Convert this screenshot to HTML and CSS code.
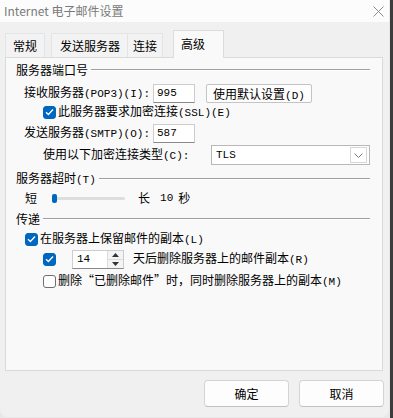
FILE: index.html
```html
<!DOCTYPE html>
<html lang="zh-CN">
<head>
    <meta charset="UTF-8">
    <meta name="viewport" content="width=device-width, initial-scale=1.0">
    <title>Internet 电子邮件设置</title>
    <link rel="stylesheet" href="styles.css">
</head>
<body>
    <div class="window">
        <div class="titlebar">
            <span class="title">Internet 电子邮件设置</span>
            <svg class="close" width="11" height="11" viewBox="0 0 11 11"><path d="M0.5 0.5L10.5 10.5M10.5 0.5L0.5 10.5" stroke="#8c8c8c" stroke-width="1"/></svg>
        </div>

        <div class="tabs">
            <div class="tab tab-1">常规</div>
            <div class="tab tab-2">发送服务器</div>
            <div class="tab tab-3">连接</div>
            <div class="tab tab-4 active">高级</div>
        </div>

        <div class="panel">
            <div class="group-title first"><span>服务器端口号</span><span class="rule"></span></div>

            <div class="row pop3">
                <span class="label-wide">接收服务器<span class="m">(POP3)(I):</span></span>
                <div class="textbox m">995</div>
                <div class="btn-small">使用默认设置<span class="m">(D)</span></div>
            </div>

            <div class="row check-row ssl">
                <span class="check on"><svg width="9" height="8" viewBox="0 0 9 8"><path d="M1 4.2L3.4 6.5L8 1.5" fill="none" stroke="#fff" stroke-width="1.3"/></svg></span>
                <span class="check-text">此服务器要求加密连接<span class="m">(SSL)(E)</span></span>
            </div>

            <div class="row smtp">
                <span class="label-wide">发送服务器<span class="m">(SMTP)(O):</span></span>
                <div class="textbox m">587</div>
            </div>

            <div class="row enc">
                <span class="label-enc">使用以下加密连接类型<span class="m">(C):</span></span>
                <div class="select">
                    <span class="select-value m">TLS</span>
                    <span class="select-arrow"><svg width="9" height="5" viewBox="0 0 9 5"><path d="M0.5 0.5L4.5 4.5L8.5 0.5" fill="none" stroke="#7a7a7a" stroke-width="1"/></svg></span>
                </div>
            </div>

            <div class="group-title second"><span>服务器超时<span class="m">(T)</span></span><span class="rule"></span></div>

            <div class="row slider-row">
                <span>短</span>
                <div class="track"><span class="thumb"></span></div>
                <span class="long">长</span>
                <span class="m secs">10</span>
                <span class="sec">秒</span>
            </div>

            <div class="group-title third"><span>传递</span><span class="rule"></span></div>

            <div class="row check-row keep">
                <span class="check on"><svg width="9" height="8" viewBox="0 0 9 8"><path d="M1 4.2L3.4 6.5L8 1.5" fill="none" stroke="#fff" stroke-width="1.3"/></svg></span>
                <span class="check-text">在服务器上保留邮件的副本<span class="m">(L)</span></span>
            </div>

            <div class="row days">
                <span class="check on"><svg width="9" height="8" viewBox="0 0 9 8"><path d="M1 4.2L3.4 6.5L8 1.5" fill="none" stroke="#fff" stroke-width="1.3"/></svg></span>
                <div class="spin">
                    <span class="spin-value m">14</span>
                    <span class="spin-btns">
                        <span class="spin-up"><svg width="7" height="4" viewBox="0 0 7 4"><path d="M0 4L3.5 0L7 4Z" fill="#333"/></svg></span>
                        <span class="spin-down"><svg width="7" height="4" viewBox="0 0 7 4"><path d="M0 0L3.5 4L7 0Z" fill="#333"/></svg></span>
                    </span>
                </div>
                <span class="days-text">天后删除服务器上的邮件副本<span class="m">(R)</span></span>
            </div>

            <div class="row check-row remove">
                <span class="check"></span>
                <span class="check-text">删除“已删除邮件”时，同时删除服务器上的副本<span class="m">(M)</span></span>
            </div>
        </div>

        <div class="footer">
            <div class="btn">确定</div>
            <div class="btn">取消</div>
        </div>
    </div>
</body>
</html>
```

FILE: styles.css
```css
html, body {
    margin: 0;
    height: 100%;
}
body {
    font-family: "Noto Sans CJK SC", "Liberation Sans", sans-serif;
    font-size: 12px;
    line-height: 16px;
    color: #000;
    background: linear-gradient(to right, #e8e8e8 390px, #3c3c3c 390px);
}
.m {
    font-family: "Liberation Mono", "Noto Sans CJK SC", monospace;
    font-size: 11px;
}
.window {
    width: 389px;
    height: 417px;
    background-color: #f0f0f0;
    border-radius: 0 0 8px 8px;
    overflow: hidden;
}
.titlebar {
    height: 22px;
    background-color: #fcfcfc;
    display: flex;
    align-items: center;
    justify-content: space-between;
    padding: 0 5px 0 4px;
}
.title {
    color: #7a7a7a;
    font-size: 12px;
}
.close {
    margin-top: 1px;
}

/* tabs */
.tabs {
    height: 35px;
    display: flex;
    align-items: flex-end;
    padding-left: 5px;
}
.tab {
    height: 23px;
    line-height: 23px;
    background-color: #f3f3f3;
    border: 1px solid #e4e4e4;
    border-bottom: none;
}
.tab-1 {
    padding: 0 7px;
}
.tab-2 {
    margin-left: 6px;
    padding: 0 7px 0 8px;
}
.tab-3 {
    padding: 0 5px;
    border-left: none;
}
.tab-4 {
    margin-left: 10px;
    padding: 0 18px 0 7px;
}
.tab.active {
    height: 27px;
    line-height: 25px;
    background-color: #f9f9f9;
    border-color: #dcdcdc;
    position: relative;
    margin-bottom: -1px;
}

/* panel */
.panel {
    margin-left: 5px;
    width: 364px;
    height: 312px;
    background-color: #f9f9f9;
    border: 1px solid #dadada;
    padding-right: 12px;
}
.group-title {
    display: flex;
    align-items: center;
    height: 16px;
    padding-left: 10px;
}
.group-title .rule {
    flex: 1;
    margin-left: 3px;
    border-top: 1px solid #a0a0a0;
    border-bottom: 1px solid #fff;
}
.group-title.first {
    margin-top: 4px;
}
.group-title.second {
    margin-top: 6px;
}
.group-title.third {
    margin-top: 5px;
}
.row {
    display: flex;
    align-items: center;
    height: 20px;
}
.check-row {
    height: 16px;
}
.pop3 {
    margin-top: 5px;
    padding-left: 18px;
}
.ssl {
    margin-top: 1px;
    padding-left: 37px;
}
.smtp {
    margin-top: 3px;
    padding-left: 18px;
}
.enc {
    margin-top: 2px;
    padding-left: 37px;
}
.label-wide {
    width: 129px;
}
.label-enc {
    width: 168px;
}
.textbox {
    width: 37px;
    height: 17px;
    line-height: 17px;
    padding-left: 3px;
    background-color: #fff;
    border: 1px solid #cdcdcd;
    border-bottom-color: #8a8a8a;
}
.btn-small {
    margin-left: 11px;
    width: 104px;
    height: 17px;
    line-height: 17px;
    text-align: center;
    background-color: #fdfdfd;
    border: 1px solid #c4c4c4;
    border-radius: 2px;
}
.select {
    width: 157px;
    height: 18px;
    display: flex;
    align-items: center;
    background-color: #fff;
    border: 1px solid #b8b8b8;
}
.select-value {
    flex: 1;
    padding-left: 4px;
}
.select-arrow {
    width: 15px;
    height: 14px;
    margin-right: 2px;
    border: 1px solid #d6d6d6;
    display: flex;
    align-items: center;
    justify-content: center;
}

/* checkboxes */
.check {
    width: 11px;
    height: 11px;
    border: 1px solid #6e6e6e;
    border-radius: 3px;
    background-color: #fff;
    display: flex;
    align-items: center;
    justify-content: center;
    flex-shrink: 0;
}
.check.on {
    background-color: #0067c0;
    border-color: #0067c0;
}
.check-text {
    margin-left: 2px;
}

/* timeout slider */
.slider-row {
    margin-top: 3px;
    height: 16px;
    padding-left: 19px;
}
.track {
    margin-left: 15px;
    width: 73px;
    height: 3px;
    background-color: #dedede;
    border-radius: 2px;
    display: flex;
    align-items: center;
}
.thumb {
    width: 5px;
    height: 9px;
    background-color: #0067c0;
    border-radius: 2px;
}
.long {
    margin-left: 13px;
}
.secs {
    margin-left: 10px;
}
.sec {
    margin-left: 5px;
}

/* delivery */
.keep {
    margin-top: 4px;
    padding-left: 19px;
}
.days {
    margin-top: 2px;
    padding-left: 37px;
}
.spin {
    margin-left: 16px;
    width: 50px;
    height: 17px;
    display: flex;
    background-color: #fff;
    border: 1px solid #cdcdcd;
    border-bottom-color: #8a8a8a;
}
.spin-value {
    flex: 1;
    line-height: 17px;
    padding-left: 4px;
}
.spin-btns {
    width: 15px;
    display: flex;
    flex-direction: column;
    border-left: 1px solid #dcdcdc;
    background-color: #f4f4f4;
}
.spin-up, .spin-down {
    flex: 1;
    display: flex;
    align-items: center;
    justify-content: center;
}
.spin-up {
    border-bottom: 1px solid #dcdcdc;
}
.days-text {
    margin-left: 9px;
}
.remove {
    margin-top: 4px;
    padding-left: 37px;
}

/* footer */
.footer {
    display: flex;
    justify-content: flex-end;
    gap: 10px;
    padding: 9px 5px 0 0;
}
.btn {
    width: 83px;
    height: 25px;
    line-height: 25px;
    text-align: center;
    background-color: #fdfdfd;
    border: 1px solid #d4d4d4;
    border-bottom-color: #c0c0c0;
    border-radius: 4px;
}
```
